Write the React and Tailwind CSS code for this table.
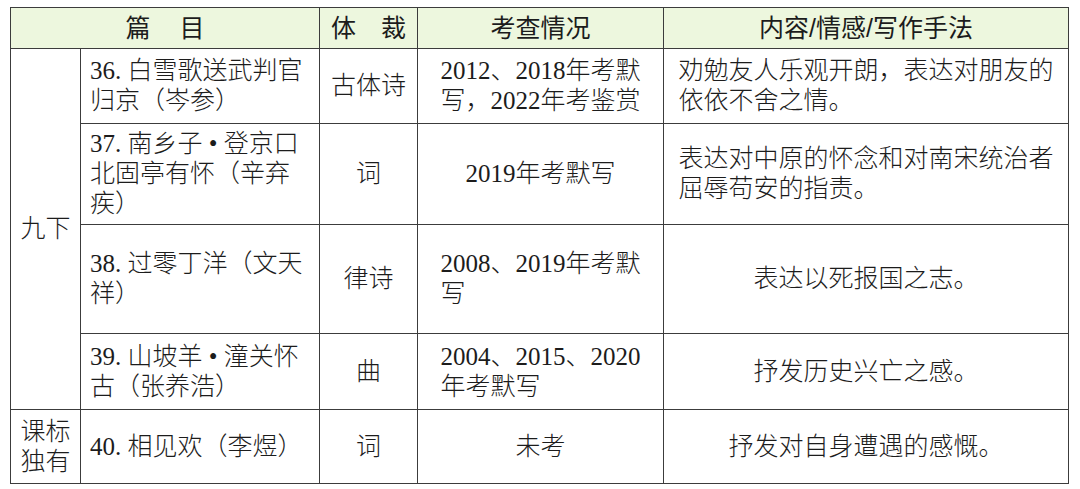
const ROWS = [
  {
    title: ['36. 白雪歌送武判官', '归京（岑参）'],
    genre: '古体诗',
    exam: ['2012、2018年考默', '写，2022年考鉴赏'],
    content: ['劝勉友人乐观开朗，表达对朋友的', '依依不舍之情。'],
    h: 'h-[75px]',
  },
  {
    title: ['37. 南乡子 • 登京口', '北固亭有怀（辛弃', '疾）'],
    genre: '词',
    exam: ['2019年考默写'],
    content: ['表达对中原的怀念和对南宋统治者', '屈辱苟安的指责。'],
    h: 'h-[101px]',
  },
  {
    title: ['38. 过零丁洋（文天', '祥）'],
    genre: '律诗',
    exam: ['2008、2019年考默', '写'],
    content: ['表达以死报国之志。'],
    h: 'h-[109px]',
  },
  {
    title: ['39. 山坡羊 • 潼关怀', '古（张养浩）'],
    genre: '曲',
    exam: ['2004、2015、2020', '年考默写'],
    content: ['抒发历史兴亡之感。'],
    h: 'h-[76px]',
  },
];

const LAST = {
  title: ['40. 相见欢（李煜）'],
  genre: '词',
  exam: ['未考'],
  content: ['抒发对自身遭遇的感慨。'],
};

const cell = 'border border-[#3c3c3c] align-middle p-0';

function Lines({ lines }) {
  return (
    <div className="flex justify-center">
      <div className="text-left">
        {lines.map((l, i) => <div key={i} className="whitespace-nowrap">{l}</div>)}
      </div>
    </div>
  );
}

function BodyCells({ r }) {
  return (
    <>
      <td className={cell}>
        <div className="pl-[9px]">
          {r.title.map((l, i) => <div key={i} className="whitespace-nowrap">{l}</div>)}
        </div>
      </td>
      <td className={`${cell} text-center`}>{r.genre}</td>
      <td className={cell}><Lines lines={r.exam} /></td>
      <td className={cell}><Lines lines={r.content} /></td>
    </>
  );
}

export default function App() {
  return (
    <div className="min-h-screen bg-white pl-[10px] pt-[7px]">
      <table
        className="w-[1058px] table-fixed border-collapse text-[25px] leading-[30px] text-[#1c1c1c]"
        style={{ fontFamily: '"Liberation Serif", "Noto Sans CJK SC", serif' }}
      >
        <colgroup>
          <col className="w-[70px]" />
          <col className="w-[239px]" />
          <col className="w-[98px]" />
          <col className="w-[246px]" />
          <col className="w-[405px]" />
        </colgroup>
        <thead>
          <tr
            className="h-[41px] bg-[#edf7de]"
            style={{ fontFamily: '"Liberation Sans", "Noto Sans CJK SC", sans-serif' }}
          >
            <th colSpan={2} className={`${cell} font-normal`}>
              <div className="flex justify-center gap-[29px]"><span>篇</span><span>目</span></div>
            </th>
            <th className={`${cell} font-normal`}>
              <div className="flex justify-center gap-[25px]"><span>体</span><span>裁</span></div>
            </th>
            <th className={`${cell} font-normal`}>考查情况</th>
            <th className={`${cell} font-normal`}>内容/情感/写作手法</th>
          </tr>
        </thead>
        <tbody className="font-light">
          {ROWS.map((r, i) => (
            <tr key={i} className={r.h}>
              {i === 0 && (
                <td rowSpan={4} className={`${cell} text-center`}>九下</td>
              )}
              <BodyCells r={r} />
            </tr>
          ))}
          <tr className="h-[74px]">
            <td className={`${cell} text-center`}>
              <div>课标</div>
              <div>独有</div>
            </td>
            <BodyCells r={LAST} />
          </tr>
        </tbody>
      </table>
    </div>
  );
}
